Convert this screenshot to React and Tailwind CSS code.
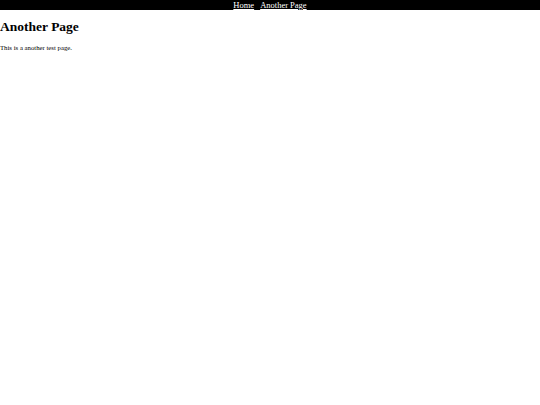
export default function App() {
  return (
    <div className="font-['Liberation_Serif',serif] text-black bg-white min-h-[405px]">
      {/* Top nav */}
      <nav className="bg-black h-[10px] flex justify-center items-center text-[8.5px] leading-[10px]">
        <a href="#" className="text-white underline">Home</a>
        <span className="w-[6px]"></span>
        <a href="#" className="text-white underline">Another Page</a>
      </nav>

      <h1 className="text-[13.5px] font-bold mt-[9px] mb-[9px] leading-[15.5px]">Another Page</h1>
      <p className="text-[6.75px] leading-[8px]">This is a another test page.</p>
    </div>
  );
}
